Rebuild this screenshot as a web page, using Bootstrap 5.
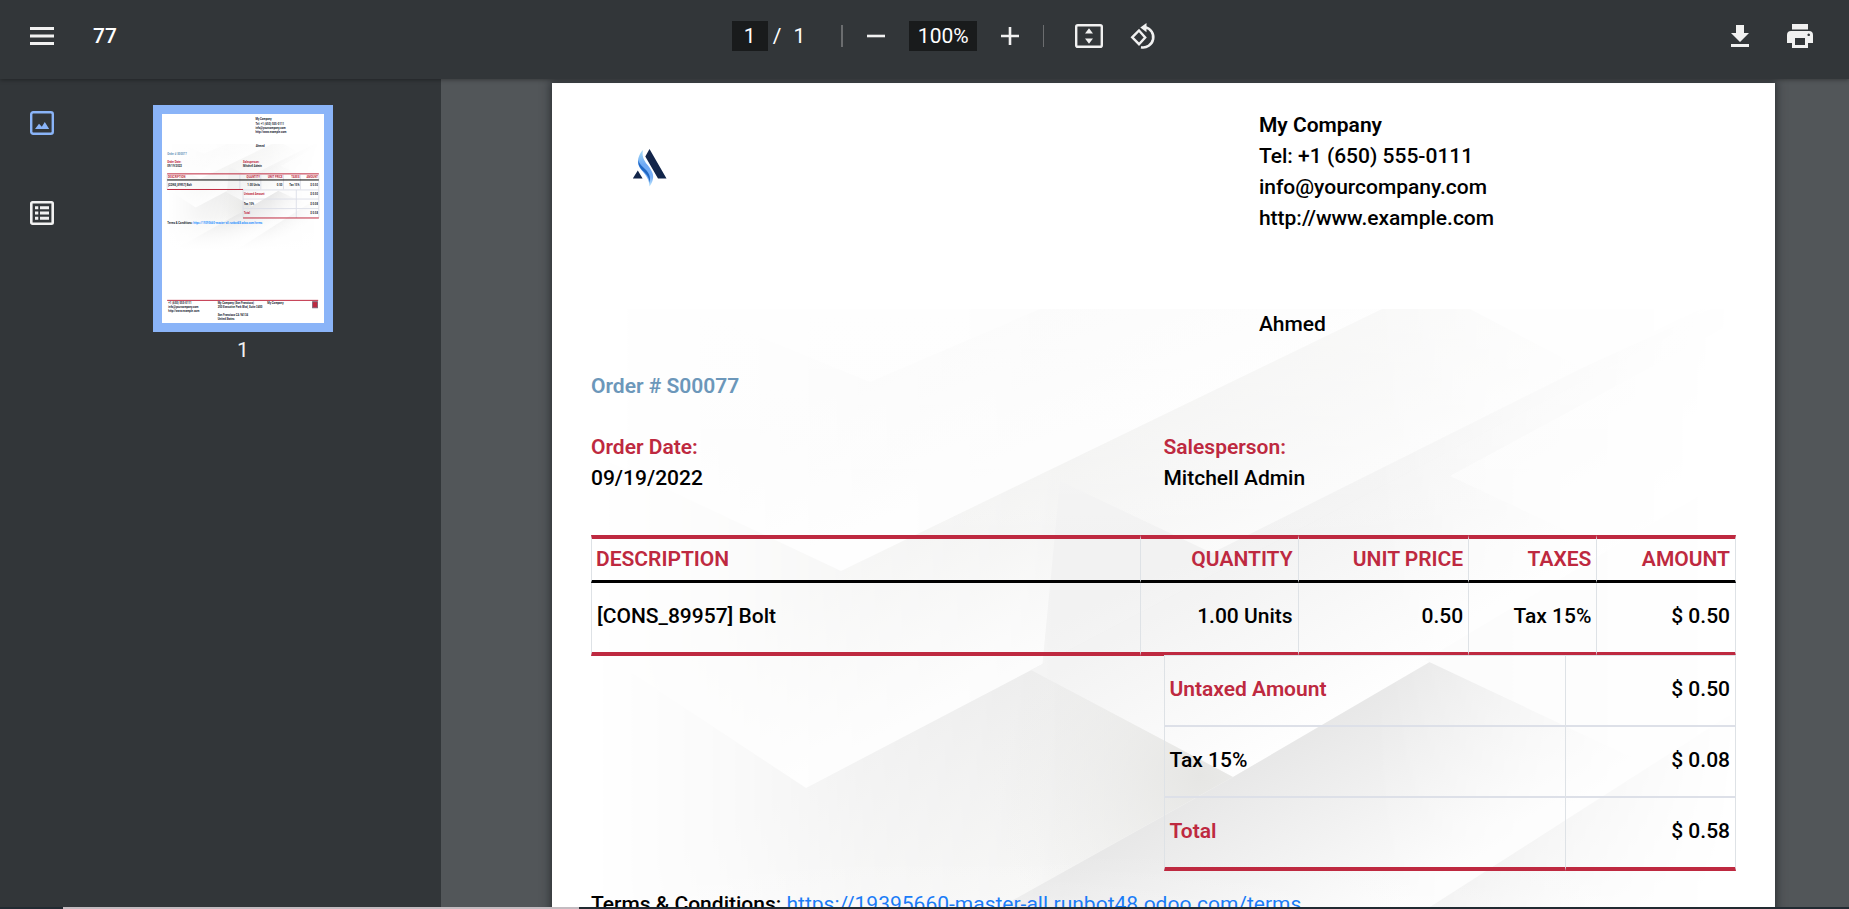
<!DOCTYPE html>
<html lang="en">
<head>
<meta charset="utf-8">
<meta name="viewport" content="width=device-width, initial-scale=1">
<title>77</title>
<link href="https://cdn.jsdelivr.net/npm/bootstrap@5.3.0/dist/css/bootstrap.min.css" rel="stylesheet">
<style>
:root { --bar: #323639; --well: #525659; --brand: #be2940; --rule: #dee2e6; }
body { font-family: Roboto, "Liberation Sans", sans-serif; font-size: 21px; line-height: 31px; font-weight: 500; color: #000; background: var(--bar); }
.toolbar { height: 79px; padding: 0 36px 7px 30px; background: var(--bar); color: #f1f1f1; z-index: 2; box-shadow: 0 1px 4px rgba(0,0,0,.35); }
.tool { background: none; border: 0; padding: 0; color: #f1f1f1; line-height: 0; }
.tool svg { display: block; fill: currentColor; }
.side-tools { flex: 1 1 0; }
.end-tools { gap: 38px; }
.doc-title { margin-left: 39px; }
.field { height: 30px; border: 0; padding: 0; background: #191b1c; color: #fff; text-align: center; font-weight: 400; }
.field-page { width: 36px; }
.field-zoom { width: 68px; }
.center-tools { padding-left: 47px; font-weight: 400; color: #fff; }
.page-slash { margin-left: 5px; }
.page-count { margin: 0 36px 0 12px; }
.zoom-tools { gap: 24px; }
.divider { width: 2px; height: 22px; background: #6b6d6f; }
.divider-thin { width: 1px; }
.view-tools { gap: 27px; margin-left: 31px; }
.sidebar { width: 441px; background: var(--bar); padding: 26px 0 0 30px; }
.rail { width: 24px; gap: 66px; padding-top: 6px; }
.rail .active { color: #8ab4f8; }
.thumb-col { margin-left: 99px; color: #f1f1f1; font-weight: 400; }
.thumb { display: block; width: 180px; border: 9px solid #8ab4f8; background: #fff; padding: 0; line-height: 0; }
.thumb svg { display: block; width: 100%; }
.thumb-col span { margin-top: 3px; }
.viewer { background: var(--well); padding: 4px 74px 0 111px; min-width: 0; }
.sheet { position: relative; background: #fff; padding: 27px 39px 0; min-height: 100%; box-shadow: 0 0 8px 2px rgba(32,36,40,.7); z-index: 0; }
.sheet-art { position: absolute; left: 0; top: 226px; width: 100%; z-index: -1; }
.logo { margin: 38px 0 0 41px; display: block; }
.company { line-height: inherit; }
.recipient { margin-top: 75px; }
.order-no { margin: 31px 0 30px; font-size: 21px; line-height: 31px; font-weight: 600; color: #6c97ba; }
.tint { color: var(--brand); font-weight: 600; }
.strong-line { font-weight: 600; }
.lines { margin-top: 41px; border-collapse: separate; border-spacing: 0; table-layout: fixed; width: 100%; }
.lines th, .lines td { border-right: 1px solid var(--rule); text-align: right; padding: 18px 5px 20px; font-weight: 500; }
.lines th:first-child, .lines td:first-child { border-left: 1px solid var(--rule); text-align: left; }
.lines thead th { border-top: 4px solid var(--brand); border-bottom: 3px solid #000; padding: 5px 5px 5px 4px; color: var(--brand); font-weight: 600; }
.lines tbody td { border-bottom: 4px solid var(--brand); }
.lines.totals { margin: -1px 0 0 auto; width: 50%; position: relative; }
.totals th.tint { font-weight: 600; }
.totals tbody tr > * { border-bottom: 2px solid #dde0e8; }
.totals tbody tr:first-child > * { border-top: 1px solid var(--rule); }
.totals tbody tr:last-child > * { border-bottom: 4px solid var(--brand); }
.terms { margin-top: 18px; }
.terms a { color: #1a7cf7; text-decoration: underline; font-weight: 400; }
.edge { height: 2px; background: #222b32; }
.edge div { margin-left: 63px; width: 516px; height: 2px; background: #c3bcc1; }
.t { font-family: Roboto, sans-serif; font-size: 21px; font-weight: 700; fill: #1c2733; }
</style>
</head>
<body class="vh-100 d-flex flex-column overflow-hidden">

<header class="toolbar d-flex align-items-center flex-shrink-0 position-relative">
  <div class="side-tools d-flex align-items-center">
    <button class="tool" type="button" aria-label="Menu"><svg width="24" height="18" viewBox="0 0 24 18"><path d="M0 0h24v3H0zM0 7.5h24v3H0zM0 15h24v3H0z"/></svg></button>
    <span class="doc-title text-white">77</span>
  </div>
  <div class="center-tools d-flex align-items-center">
    <input class="field field-page" type="text" value="1" aria-label="Page number">
    <span class="page-slash">/</span><span class="page-count">1</span>
    <div class="zoom-tools d-flex align-items-center">
      <span class="divider"></span>
      <button class="tool" type="button" aria-label="Zoom out"><svg width="18" height="18" viewBox="0 0 18 18"><path d="M0 7.7h18v2.6H0z"/></svg></button>
      <input class="field field-zoom" type="text" value="100%" aria-label="Zoom level">
      <button class="tool" type="button" aria-label="Zoom in"><svg width="18" height="18" viewBox="0 0 18 18"><path d="M0 7.7h7.7V0h2.6v7.7H18v2.6h-7.7V18H7.7v-7.7H0z"/></svg></button>
      <span class="divider divider-thin"></span>
    </div>
    <div class="view-tools d-flex align-items-center">
      <button class="tool" type="button" aria-label="Fit to page"><svg width="28" height="24" viewBox="0 0 28 24"><rect x="1.2" y="1.2" width="25.6" height="21.6" rx="1.6" fill="none" stroke="currentColor" stroke-width="2.4"/><path d="M14 4.2l4 5.3h-8zM14 19.8l4-5.3h-8z"/></svg></button>
      <button class="tool" type="button" aria-label="Rotate"><svg width="28" height="27" viewBox="0 0 28 27"><path d="M9 7.5l6.2 7L9 21.2l-6.8-6.9z" fill="none" stroke="currentColor" stroke-width="2.4"/><path d="M15.2 4.2A10.2 10.2 0 1 1 11 24.2" fill="none" stroke="currentColor" stroke-width="2.6"/><path d="M16.5 0v9.2L10.3 4.6z"/></svg></button>
    </div>
  </div>
  <div class="side-tools end-tools d-flex align-items-center justify-content-end">
    <button class="tool" type="button" aria-label="Download"><svg width="18" height="22" viewBox="0 0 18 22"><path d="M5 0h8v8h5l-9 9-9-9h5zM0 19h18v3H0z"/></svg></button>
    <button class="tool" type="button" aria-label="Print"><svg width="26" height="24" viewBox="0 0 26 24"><path fill-rule="evenodd" d="M5 0h16v5.5H5zM4 7h18a4 4 0 0 1 4 4v8h-5v5H5v-5H0v-8a4 4 0 0 1 4-4zm4 7v7h10v-7zM21.7 9.5a1.3 1.3 0 1 0 .01 0z"/></svg></button>
  </div>
</header>

<main class="d-flex flex-fill overflow-hidden">
  <aside class="sidebar d-flex align-items-start flex-shrink-0">
    <nav class="rail d-flex flex-column">
      <button class="tool active" type="button" aria-label="Thumbnails"><svg width="24" height="24" viewBox="0 0 24 24"><rect x="1.2" y="1.2" width="21.6" height="21.6" rx="2" fill="none" stroke="currentColor" stroke-width="2.4"/><path d="M5 18l4-5.3 2.8 3 3-4.7 4.4 7z"/></svg></button>
      <button class="tool" type="button" aria-label="Document outline"><svg width="24" height="24" viewBox="0 0 24 24"><rect x="1.3" y="1.3" width="21.4" height="21.4" rx="1.2" fill="none" stroke="currentColor" stroke-width="2.6"/><path d="M5 5.3h3.3v3H5zM10 5.3h9v3h-9zM5 10.5h3.3v3H5zM10 10.5h9v3h-9zM5 15.7h3.3v3H5zM10 15.7h9v3h-9z"/></svg></button>
    </nav>
    <div class="thumb-col d-flex flex-column align-items-center">
      <button class="thumb" type="button" aria-label="Page 1">
        <svg viewBox="0 0 1223 1578">
          <use href="#art" x="-552" y="-83"/>
          <g class="t">
            <text x="706" y="49">My Company</text><text x="706" y="80">Tel: +1 (650) 555-0111</text><text x="706" y="111">info@yourcompany.com</text><text x="706" y="141">http://www.example.com</text>
            <text x="707" y="248">Ahmed</text>
            <text x="39" y="309" fill="#6c97ba">Order # S00077</text>
            <text x="39" y="371" fill="#be2940">Order Date:</text><text x="39" y="402">09/19/2022</text>
            <text x="612" y="371" fill="#be2940">Salesperson:</text><text x="612" y="402">Mitchell Admin</text>
            <text x="44" y="483" fill="#be2940">DESCRIPTION</text>
            <g text-anchor="end" fill="#be2940"><text x="740" y="483">QUANTITY</text><text x="911" y="483">UNIT PRICE</text><text x="1039" y="483">TAXES</text><text x="1178" y="483">AMOUNT</text></g>
            <text x="45" y="540">[CONS_89957] Bolt</text>
            <g text-anchor="end"><text x="740" y="540">1.00 Units</text><text x="909" y="540">0.50</text><text x="1038" y="540">Tax 15%</text><text x="1178" y="540">$ 0.50</text><text x="1178" y="613">$ 0.50</text><text x="1178" y="684">$ 0.08</text><text x="1178" y="754">$ 0.58</text></g>
            <text x="618" y="613" fill="#be2940">Untaxed Amount</text><text x="618" y="684">Tax 15%</text><text x="618" y="754" fill="#be2940">Total</text>
            <text x="39" y="829">Terms &amp; Conditions: <tspan fill="#2f93ff">https://19395660-master-all.runbot48.odoo.com/terms</tspan></text>
            <text x="48" y="1434">+1 (650) 555-0111</text><text x="48" y="1464">info@yourcompany.com</text><text x="48" y="1494">http://www.example.com</text>
            <text x="420" y="1434">My Company (San Francisco)</text><text x="420" y="1464">250 Executive Park Blvd, Suite 3400</text><text x="420" y="1525">San Francisco CA 94134</text><text x="420" y="1555">United States</text>
            <text x="795" y="1434">My Company</text>
          </g>
          <path d="M39 457V570M588 457V570M746 457V570M917 457V570M1045 457V570M1184 457V785M612 573V785M1014 573V785M612 573H1184M612 642H1184M612 714H1184" fill="none" stroke="#dcdfe8" stroke-width="7"/>
          <path d="M39 452H1184M39 570H612M612 785H1184M39 1407H1179" stroke="#be2940" stroke-width="7.5"/>
          <path d="M39 498H1184" stroke="#000" stroke-width="7.5"/>
          <rect x="1137" y="1417" width="37" height="46" fill="#be2940" stroke="#7d6275" stroke-width="7"/>
        </svg>
      </button>
      <span>1</span>
    </div>
  </aside>

  <section class="viewer flex-fill">
    <article class="sheet">
      <svg class="sheet-art" viewBox="552 309 1223 800" aria-hidden="true">
        <defs>
          <linearGradient id="fade" x1="590" x2="1740" y1="0" y2="0" gradientUnits="userSpaceOnUse"><stop offset="0" stop-color="#000"/><stop offset=".12" stop-color="#444"/><stop offset=".24" stop-color="#aaa"/><stop offset=".42" stop-color="#fff"/><stop offset=".68" stop-color="#fff"/><stop offset=".92" stop-color="#444"/><stop offset="1" stop-color="#000"/></linearGradient>
          <linearGradient id="fall" x1="0" x2="0" y1="309" y2="1109" gradientUnits="userSpaceOnUse"><stop offset="0" stop-color="#fff" stop-opacity=".5"/><stop offset=".3" stop-color="#fff" stop-opacity="0"/><stop offset=".68" stop-color="#fff" stop-opacity="0"/><stop offset="1" stop-color="#fff"/></linearGradient>
          <mask id="soft" maskUnits="userSpaceOnUse" x="552" y="309" width="1223" height="800"><rect x="552" y="309" width="1223" height="800" fill="url(#fade)"/></mask>
          <linearGradient id="a1" x1="955" y1="345" x2="1005" y2="470" gradientUnits="userSpaceOnUse"><stop offset="0" stop-color="#f8f8f8"/><stop offset="1" stop-color="#fdfdfd"/></linearGradient>
          <linearGradient id="a2" x1="1111" y1="440" x2="1183" y2="588" gradientUnits="userSpaceOnUse"><stop offset="0" stop-color="#f2f2f1"/><stop offset="1" stop-color="#fcfcfc"/></linearGradient>
          <linearGradient id="a3" x1="1397" y1="460" x2="1440" y2="550" gradientUnits="userSpaceOnUse"><stop offset="0" stop-color="#f2f2f2"/><stop offset="1" stop-color="#f8f8f8"/></linearGradient>
          <linearGradient id="a4" x1="1130" y1="617" x2="1220" y2="789" gradientUnits="userSpaceOnUse"><stop offset="0" stop-color="#ececec"/><stop offset="1" stop-color="#f6f6f5"/></linearGradient>
          <linearGradient id="a5" x1="1300" y1="530" x2="1390" y2="685" gradientUnits="userSpaceOnUse"><stop offset="0" stop-color="#f3f3f3"/><stop offset="1" stop-color="#fefefe"/></linearGradient>
          <radialGradient id="a6" cx="1200" cy="775" r="210" gradientUnits="userSpaceOnUse"><stop offset="0" stop-color="#e6e6e4"/><stop offset="1" stop-color="#ededec" stop-opacity="0"/></radialGradient>
          <linearGradient id="a7" x1="1334" y1="720" x2="1440" y2="904" gradientUnits="userSpaceOnUse"><stop offset="0" stop-color="#e8e8e8"/><stop offset=".9" stop-color="#fcfcfc"/></linearGradient>
          <linearGradient id="a8" x1="1541" y1="836" x2="1600" y2="940" gradientUnits="userSpaceOnUse"><stop offset="0" stop-color="#eeeeee"/><stop offset="1" stop-color="#fbfbfb"/></linearGradient>
        </defs>
        <g id="art">
          <g mask="url(#soft)">
            <rect x="552" y="309" width="1223" height="800" fill="#fcfcfc"/>
            <path d="M552 252L870 382L1040 309H1775V1109H552z" fill="url(#a1)"/>
            <path d="M552 435L841 571L1382 309H1775V1109H552z" fill="url(#a2)"/>
            <path d="M1060 481L1212 553L1582 368L1775 280V1109H1000z" fill="url(#a3)"/>
            <path d="M1470 309L1582 368L1700 309z" fill="#fdfdfd"/>
            <path d="M552 620L806 788L1720 309H1775V1109H552z" fill="url(#a4)"/>
            <path d="M1031 670L1720 309H1775V470L1233 777z" fill="url(#a5)"/>
            <path d="M1450 476L1614 553L1775 470V300z" fill="#fefefe" opacity=".6"/>
            <path d="M1031 670L1233 777L1000 907L860 850z" fill="url(#a6)"/>
            <path d="M640 1109L1233 777L1775 460V1109z" fill="url(#a7)"/>
            <path d="M1425 660L1650 766L1775 690V450z" fill="#fbfbfb"/>
            <path d="M1115 1109L1433 905L1775 686V1109z" fill="url(#a8)"/>
          </g>
          <rect x="552" y="308" width="1223" height="802" fill="url(#fall)"/>
        </g>
      </svg>

      <div class="row g-0">
        <div class="col-7">
          <svg class="logo" width="35" height="42" viewBox="0 0 35 42" role="img" aria-label="My Company logo">
            <defs><linearGradient id="flame" x1="0" y1="0" x2="0" y2="1"><stop offset="0" stop-color="#a6dcf6"/><stop offset=".4" stop-color="#6fa9f5"/><stop offset=".75" stop-color="#78b0f8"/><stop offset="1" stop-color="#bfe6fb"/></linearGradient></defs>
            <path d="M17.5 1L34.5 30.5H26L13.3 8.5zM0.8 30.5L5.8 22.5L10.6 30.5z" fill="#12254a"/>
            <path d="M11 2C7 6 5 12 6.5 17C9 24 17 27 17.5 38.5C21 34 22 29 20.5 25C18 17 8.5 13 11 2z" fill="url(#flame)"/>
            <path d="M6.5 12C5.5 18 9 21 13 25C16 28 17.5 31 17.6 35C19 29 17 25 13.5 21.5C10 18 7 16 6.5 12z" fill="#2168c4"/>
          </svg>
        </div>
        <address class="company col-5 mb-0">
          <div class="strong-line">My Company</div>
          <div>Tel: +1 (650) 555-0111</div>
          <div>info@yourcompany.com</div>
          <div>http://www.example.com</div>
        </address>
      </div>
      <div class="row g-0 recipient"><div class="col-5 offset-7">Ahmed</div></div>

      <h1 class="order-no">Order # S00077</h1>
      <div class="row g-0">
        <div class="col-6"><div class="tint">Order Date:</div><div>09/19/2022</div></div>
        <div class="col-6"><div class="tint">Salesperson:</div><div>Mitchell Admin</div></div>
      </div>

      <table class="lines">
        <colgroup><col style="width:48%"><col style="width:13.8%"><col style="width:14.9%"><col style="width:11.2%"><col style="width:12.1%"></colgroup>
        <thead><tr><th>DESCRIPTION</th><th>QUANTITY</th><th>UNIT PRICE</th><th>TAXES</th><th>AMOUNT</th></tr></thead>
        <tbody><tr><td>[CONS_89957] Bolt</td><td>1.00 Units</td><td>0.50</td><td>Tax 15%</td><td>$ 0.50</td></tr></tbody>
      </table>
      <table class="lines totals">
        <colgroup><col style="width:70.3%"><col style="width:29.7%"></colgroup>
        <tbody>
          <tr><th class="tint">Untaxed Amount</th><td>$ 0.50</td></tr>
          <tr><th>Tax 15%</th><td>$ 0.08</td></tr>
          <tr><th class="tint">Total</th><td>$ 0.58</td></tr>
        </tbody>
      </table>
      <p class="terms mb-0">Terms &amp; Conditions: <a href="#terms">https://19395660-master-all.runbot48.odoo.com/terms</a></p>
    </article>
  </section>
</main>
<footer class="edge flex-shrink-0"><div></div></footer>
<script src="https://cdn.jsdelivr.net/npm/bootstrap@5.3.0/dist/js/bootstrap.bundle.min.js"></script>
</body>
</html>
